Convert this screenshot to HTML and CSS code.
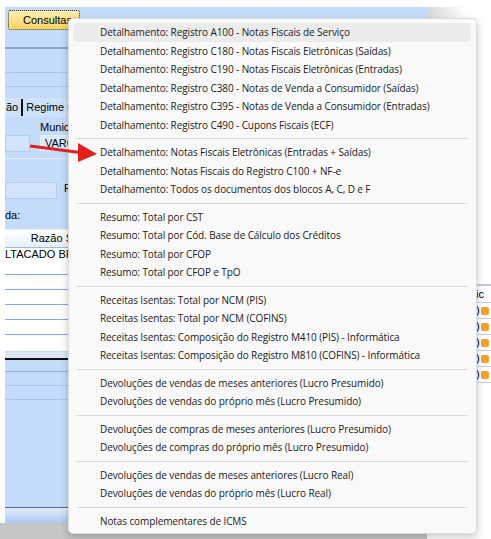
FILE: index.html
```html
<!DOCTYPE html>
<html lang="pt-BR">
<head>
  <meta charset="UTF-8">
  <title>Consultas</title>
  <link rel="stylesheet" href="styles.css">
</head>
<body>
  <div class="screen">
    <div class="app">
      <div class="main">
        <div class="toolbar">
          <span class="tab-btn">Consultas</span>
        </div>
        <div class="rule"></div>
        <div class="band band-1"></div>
        <div class="band band-2"></div>
        <div class="band band-3"></div>
        <div class="tabs">
          <span class="tab">ão</span>
          <span class="tab tab-active">Regime Co</span>
        </div>
        <div class="label-row"><span class="label">Municíp</span></div>
        <div class="field-row">
          <span class="box box-small"></span>
          <span class="box box-city">VARG</span>
        </div>
        <div class="line-row"></div>
        <div class="field-row field-row-2">
          <span class="box box-wide"></span>
          <span class="label">F</span>
        </div>
        <div class="caption">da:</div>
        <div class="grid">
          <div class="grid-head">Razão S</div>
          <div class="grid-row grid-row-first">LTACADO BRAS</div>
          <div class="grid-row"></div>
          <div class="grid-row"></div>
          <div class="grid-row"></div>
          <div class="grid-row"></div>
          <div class="grid-row"></div>
        </div>
        <div class="lower">
          <div class="lower-line"></div>
          <div class="lower-line lower-line-soft"></div>
          <div class="lower-line lower-line-soft"></div>
        </div>
        <div class="status"></div>
        <div class="footer"></div>
      </div>
      <div class="side">
        <div class="side-head"></div>
        <div class="side-list">
          <div class="side-title">ic</div>
          <div class="side-row">)<span class="ico"></span></div>
          <div class="side-row">)<span class="ico"></span></div>
          <div class="side-row">)<span class="ico"></span></div>
          <div class="side-row">)<span class="ico"></span></div>
          <div class="side-row">)<span class="ico"></span></div>
        </div>
      </div>
    </div>

    <div class="menu">
      <div class="item item-hover">Detalhamento: Registro A100 - Notas Fiscais de Serviço</div>
      <div class="item">Detalhamento: Registro C180 - Notas Fiscais Eletrônicas (Saídas)</div>
      <div class="item">Detalhamento: Registro C190 - Notas Fiscais Eletrônicas (Entradas)</div>
      <div class="item">Detalhamento: Registro C380 - Notas de Venda a Consumidor (Saídas)</div>
      <div class="item">Detalhamento: Registro C395 - Notas de Venda a Consumidor (Entradas)</div>
      <div class="item">Detalhamento: Registro C490 - Cupons Fiscais (ECF)</div>
      <div class="sep"></div>
      <div class="item">Detalhamento: Notas Fiscais Eletrônicas (Entradas + Saídas)</div>
      <div class="item">Detalhamento: Notas Fiscais do Registro C100 + NF-e</div>
      <div class="item">Detalhamento: Todos os documentos dos blocos A, C, D e F</div>
      <div class="sep"></div>
      <div class="item">Resumo: Total por CST</div>
      <div class="item">Resumo: Total por Cód. Base de Cálculo dos Créditos</div>
      <div class="item">Resumo: Total por CFOP</div>
      <div class="item">Resumo: Total por CFOP e TpO</div>
      <div class="sep"></div>
      <div class="item">Receitas Isentas: Total por NCM (PIS)</div>
      <div class="item">Receitas Isentas: Total por NCM (COFINS)</div>
      <div class="item">Receitas Isentas: Composição do Registro M410 (PIS) - Informática</div>
      <div class="item">Receitas Isentas: Composição do Registro M810 (COFINS) - Informática</div>
      <div class="sep"></div>
      <div class="item">Devoluções de vendas de meses anteriores (Lucro Presumido)</div>
      <div class="item">Devoluções de vendas do próprio mês (Lucro Presumido)</div>
      <div class="sep"></div>
      <div class="item">Devoluções de compras de meses anteriores (Lucro Presumido)</div>
      <div class="item">Devoluções de compras do próprio mês (Lucro Presumido)</div>
      <div class="sep"></div>
      <div class="item">Devoluções de vendas de meses anteriores (Lucro Real)</div>
      <div class="item">Devoluções de vendas do próprio mês (Lucro Real)</div>
      <div class="sep"></div>
      <div class="item">Notas complementares de ICMS</div>
    </div>

    <svg class="arrow" width="80" height="30" viewBox="0 0 80 30">
      <line x1="2" y1="8" x2="56" y2="15" stroke="#e3211c" stroke-width="3" />
      <polygon points="50,5 69,16 50,24" fill="#e3211c" />
    </svg>
  </div>
</body>
</html>
```

FILE: styles.css
```css
* {
  box-sizing: border-box;
}
body {
  margin: 0;
  background: #ffffff;
  font-family: "Liberation Sans", Arial, sans-serif;
  font-size: 11px;
  color: #000;
}
.screen {
  position: relative;
  width: 491px;
  height: 539px;
  overflow: hidden;
  padding-top: 7px;
}
.app {
  display: flex;
  height: 532px;
}

/* left window (blue) */
.main {
  width: 422px;
  margin-left: 5px;
  background: #c4dbfb;
  display: flex;
  flex-direction: column;
}
.toolbar {
  height: 40px;
  padding: 3px 0 0 3px;
}
.tab-btn {
  display: inline-block;
  width: 72px;
  height: 20px;
  line-height: 18px;
  padding-left: 14px;
  border: 1px dotted #333;
  border-radius: 2px;
  background: linear-gradient(#fdeeb0, #f8d266);
  font-size: 11px;
}
.rule {
  height: 2px;
  background: #86a6d6;
}
.band {
  border-bottom: 1px solid #aac6ee;
}
.band-1 { height: 24px; }
.band-2 { height: 14px; }
.band-3 { height: 11px; border-bottom: none; }
.tabs {
  height: 19px;
  display: flex;
  align-items: center;
  background: #cfe2fb;
}
.tab {
  padding: 0 3px 0 1px;
  line-height: 17px;
}
.tab-active {
  border-left: 2px solid #111;
  padding-left: 3px;
}
.label-row {
  height: 18px;
  padding: 4px 0 0 35px;
}
.field-row {
  height: 18px;
  display: flex;
  gap: 10px;
}
.box {
  height: 17px;
  border: 1px solid #b4cdef;
  background: #d2e4fc;
}
.box-small { width: 25px; }
.box-city {
  width: 60px;
  padding-left: 4px;
  line-height: 15px;
  background: #dce9fc;
  border-color: #e6effd #c4dbfb #c4dbfb #e6effd;
}
.line-row {
  height: 24px;
  border-top: 1px solid #e4eefc;
  margin-top: 5px;
}
.field-row-2 {
  height: 25px;
  gap: 7px;
  align-items: flex-start;
}
.box-wide { width: 52px; }
.caption {
  height: 22px;
  line-height: 16px;
}
.grid {
  background: #ffffff;
  border-top: 1px solid #e9f1fd;
}
.grid-head {
  height: 18px;
  line-height: 17px;
  text-align: right;
  padding-right: 354px;
  background: linear-gradient(#ffffff, #e8f0fb);
  border-bottom: 1px solid #9cbbe8;
}
.grid-row {
  height: 15px;
  border-bottom: 1px solid #7ea9ea;
}
.grid-row-first {
  height: 27px;
  line-height: 12px;
  border-bottom: 1px solid #7ea9ea;
}
.grid-row:last-child {
  height: 17px;
  border-bottom: 1px solid #c9daf3;
}
.lower {
  flex: 1;
  border-top: 6px solid #dde7f5;
}
.lower-line {
  height: 14px;
  border-top: 2px solid #111;
  border-bottom: 1px solid #8fb2e3;
}
.lower-line-soft {
  border-top: none;
  border-bottom: 1px solid #a9c6ef;
}
.status {
  height: 16px;
  border-top: 1px solid #556a88;
  background: linear-gradient(#e2edfc, #aac8f0);
}
.footer {
  height: 16px;
  margin-left: -5px;
  background: #c6c6c6;
}

/* right window (white) */
.side {
  flex: 1;
  background: #ffffff;
  display: flex;
  flex-direction: column;
}
.side-head {
  height: 12px;
  background: linear-gradient(90deg, #d9d9d9, #ffffff 60%);
}
.side-list {
  margin-top: 265px;
  padding-left: 49px;
  border-top: 2px solid #c2c8d2;
}
.side-title {
  height: 17px;
  line-height: 16px;
  border-bottom: 1px solid #c8ced8;
}
.side-row {
  height: 16px;
  line-height: 15px;
  border-bottom: 1px solid #c8ced8;
  display: flex;
  align-items: center;
  gap: 1px;
}
.ico {
  width: 8px;
  height: 8px;
  background: #f0a330;
  border-radius: 2px;
}

/* context menu */
.menu {
  position: absolute;
  left: 68px;
  top: 18px;
  width: 409px;
  padding: 4px 5px 3px 4px;
  background: #f9f9f9;
  border: 1px solid #dcdcdc;
  border-radius: 5px;
  box-shadow: 0 3px 9px rgba(0, 0, 0, 0.22);
  font-family: "Open Sans", "Noto Sans", sans-serif;
  font-size: 10px;
  letter-spacing: -0.1px;
  color: #1b1b1b;
}
.item {
  height: 18.5px;
  line-height: 18.5px;
  padding-left: 27px;
  white-space: nowrap;
  border-radius: 4px;
}
.item-hover {
  background: #ececec;
}
.sep {
  height: 1px;
  margin: 4px 3px 4px 3px;
  background: #d9d9d9;
}

/* annotation arrow, drawn over the menu */
.arrow {
  position: absolute;
  left: 28px;
  top: 138px;
}
```
